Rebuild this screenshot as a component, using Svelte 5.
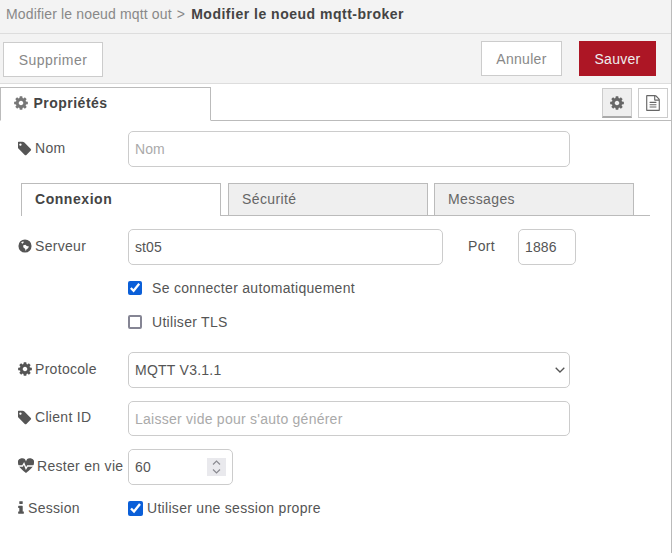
<script>
  const cog = "M1024 896q0-106-75-181t-181-75-181 75-75 181 75 181 181 75 181-75 75-181zm512-109v222q0 12-8 23t-20 13l-185 28q-19 54-39 91 35 50 107 138 10 12 10 25t-9 23q-27 37-99 108t-94 71q-12 0-26-9l-138-108q-44 23-91 38-16 136-29 186-7 28-36 28h-222q-14 0-24.5-8.5t-11.5-21.5l-28-184q-49-16-90-37l-141 107q-10 9-25 9-14 0-25-11-126-114-165-168-7-10-7-23 0-12 8-23 15-21 51-66.5t54-70.5q-27-50-41-99l-183-27q-13-2-21-12.5t-8-23.5v-222q0-12 8-23t19-13l186-28q14-46 39-92-40-57-107-138-10-12-10-24 0-10 9-23 26-36 98.5-107.5t94.5-71.5q13 0 26 10l138 107q44-23 91-38 16-136 29-186 7-28 36-28h222q14 0 24.5 8.5t11.5 21.5l28 184q49 16 90 37l142-107q9-9 24-9 13 0 25 10 129 119 165 170 7 8 7 22 0 12-8 23-15 21-51 66.5t-54 70.5q26 50 41 98l183 28q13 2 21 12.5t8 23.5z";
  const tag = "M384 512q0-53-37.5-90.5t-90.5-37.5-90.5 37.5-37.5 90.5 37.5 90.5 90.5 37.5 90.5-37.5 37.5-90.5zm1067 576q0 53-37 90l-491 492q-39 37-91 37-53 0-90-37l-715-716q-38-37-64.5-101t-26.5-117v-416q0-52 38-90t90-38h416q53 0 117 26.5t102 64.5l715 714q37 39 37 91z";
  const info = "M640 1344v128q0 26-19 45t-45 19h-512q-26 0-45-19t-19-45v-128q0-26 19-45t45-19h64v-384h-64q-26 0-45-19t-19-45v-128q0-26 19-45t45-19h384q26 0 45 19t19 45v576h64q26 0 45 19t19 45zm-128-1152v192q0 26-19 45t-45 19h-256q-26 0-45-19t-19-45v-192q0-26 19-45t45-19h256q26 0 45 19t19 45z";
  const file = "M1468 380q28 28 48 76t20 88v1152q0 40-28 68t-68 28h-1344q-40 0-68-28t-28-68v-1600q0-40 28-68t68-28h896q40 0 88 20t76 48zm-444-244v376h376q-10-29-22-41l-313-313q-12-12-41-22zm384 1528v-1024h-416q-40 0-68-28t-28-68v-416h-768v1536h1280zm-1024-864q0-14 9-23t23-9h704q14 0 23 9t9 23v64q0 14-9 23t-23 9h-704q-14 0-23-9t-9-23v-64zm736 224q14 0 23 9t9 23v64q0 14-9 23t-23 9h-704q-14 0-23-9t-9-23v-64q0-14 9-23t23-9h704zm0 256q14 0 23 9t9 23v64q0 14-9 23t-23 9h-704q-14 0-23-9t-9-23v-64q0-14 9-23t23-9h704z";
</script>

<div class="tray">
  <div class="title">
    <span class="crumb">Modifier le noeud mqtt out</span>
    <span class="sep">&gt;</span>
    <b>Modifier le noeud mqtt-broker</b>
  </div>

  <div class="toolbar">
    <button class="btn del">Supprimer</button>
    <div class="actions">
      <button class="btn cancel">Annuler</button>
      <button class="btn save">Sauver</button>
    </div>
  </div>

  <div class="tabs">
    <div class="tab">
      <svg class="ico" viewBox="0 0 1536 1792"><path d={cog} /></svg>
      Propriétés
    </div>
    <div class="tab-btns">
      <button class="icon-btn on" aria-label="Propriétés">
        <svg viewBox="0 0 1536 1792"><path d={cog} /></svg>
      </button>
      <button class="icon-btn" aria-label="Description">
        <svg viewBox="0 0 1536 1792"><path d={file} /></svg>
      </button>
    </div>
  </div>

  <form class="body">
    <div class="row low">
      <label for="nom"><svg class="ico" viewBox="0 0 1536 1792"><path d={tag} /></svg>Nom</label>
      <input id="nom" class="wide" placeholder="Nom" />
    </div>

    <div class="subtabs">
      <div class="sub active">Connexion</div>
      <div class="sub">Sécurité</div>
      <div class="sub">Messages</div>
    </div>

    <div class="row low">
      <label for="srv">
        <svg class="ico" viewBox="0 0 16 16">
          <path fill-rule="evenodd" d="M8 .5a7.500 7.500 0 1 1 0 15 7.500 7.500 0 0 1 0-15zM3.500 4l2.500-1.500.5 1.500-1.500 1.500zM6 7l2.500-.5 1.500 1.500 2.500.5-1 2-2 1.500-.5 2-1-3-2-1.500z" />
        </svg>Serveur
      </label>
      <input id="srv" class="host" value="st05" />
      <label class="port-label" for="port">Port</label>
      <input id="port" class="port" value="1886" />
    </div>

    <div class="check first">
      <input type="checkbox" id="auto" checked />
      <label for="auto">Se connecter automatiquement</label>
    </div>
    <div class="check second">
      <input type="checkbox" id="tls" />
      <label for="tls">Utiliser TLS</label>
    </div>

    <div class="row proto low">
      <label for="proto"><svg class="ico" viewBox="0 0 1536 1792"><path d={cog} /></svg>Protocole</label>
      <select id="proto" class="wide"><option>MQTT V3.1.1</option></select>
    </div>

    <div class="row client">
      <label for="cid"><svg class="ico" viewBox="0 0 1536 1792"><path d={tag} /></svg>Client ID</label>
      <input id="cid" class="wide short" placeholder="Laisser vide pour s'auto générer" />
    </div>

    <div class="row keep">
      <label for="ka">
        <svg class="ico heart" viewBox="0 0 16 14">
          <path d="M8 14C5 11.500 0 8 0 4a4 4 0 0 1 8-1.500A4 4 0 0 1 16 4c0 4-5 7.500-8 10z" />
          <path d="M0 7h4.500l1.500-2.500 2 5 1.500-2.500H16" fill="none" stroke="#fff" stroke-width="1.300" />
        </svg>Rester en vie
      </label>
      <div class="number">
        <input id="ka" value="60" />
        <span class="spin">
          <svg viewBox="0 0 9 16"><path d="M1 5.500l3.500-3.500 3.500 3.500M1 10.500l3.500 3.500 3.500-3.500" /></svg>
        </span>
      </div>
    </div>

    <div class="row session">
      <label for="clean"><svg class="ico info" viewBox="0 0 640 1792"><path d={info} /></svg>Session</label>
      <input type="checkbox" id="clean" checked />
      <label class="clean-label" for="clean">Utiliser une session propre</label>
    </div>
  </form>
</div>

<style>
  :global(body) {
    background: #fff;
  }

  .tray {
    box-sizing: border-box;
    width: 672px;
    height: 553px;
    border-right: 1px solid #bbb;
    font-family: "Liberation Sans", Arial, sans-serif;
    font-size: 14px;
    letter-spacing: 0.3px;
    color: #555;
    background: #fff;
  }

  .title {
    box-sizing: border-box;
    height: 34px;
    padding: 6px 6px 0;
    background: #f3f3f3;
    border-bottom: 1px solid #ddd;
    color: #888;
    line-height: 16px;
    letter-spacing: 0.15px;
  }

  .title b {
    color: #444;
    letter-spacing: 0.5px;
  }

  .sep {
    margin: 0 2px 0 1px;
  }

  .toolbar {
    box-sizing: border-box;
    height: 50px;
    display: flex;
    justify-content: space-between;
    padding: 7px 15px 0 3px;
    background: #f3f3f3;
    border-bottom: 1px solid #ddd;
  }

  .actions {
    display: flex;
    gap: 17px;
  }

  .btn {
    box-sizing: border-box;
    height: 35px;
    background: #fff;
    border: 1px solid #ccc;
    color: #888;
    font: inherit;
    letter-spacing: 0.3px;
    padding: 0;
  }

  .del {
    width: 100px;
    margin-top: 1px;
    letter-spacing: 0.45px;
  }

  .cancel {
    width: 81px;
  }

  .save {
    width: 77px;
    background: #ad1625;
    border-color: #ad1625;
    color: #eee;
  }

  .tabs {
    box-sizing: border-box;
    height: 37px;
    padding-top: 3px;
    display: flex;
    justify-content: space-between;
    border-bottom: 1px solid #bbb;
  }

  .tab {
    box-sizing: border-box;
    width: 211px;
    height: 34px;
    padding: 7px 0 0 13px;
    border: 1px solid #bbb;
    border-bottom: 1px solid #fff;
    font-weight: bold;
    letter-spacing: 0.5px;
    color: #444;
    line-height: 16px;
    background: #fff;
  }

  .tab .ico {
    margin-right: 1px;
    color: #777;
  }

  .ico {
    width: 14px;
    height: 16px;
    fill: currentColor;
    vertical-align: -3px;
    margin-right: 3px;
  }

  .tab-btns {
    display: flex;
    gap: 6px;
    padding: 1px 3px 0 0;
  }

  .icon-btn {
    box-sizing: border-box;
    width: 30px;
    height: 30px;
    padding: 0;
    background: #fff;
    border: 1px solid #ccc;
    display: flex;
    align-items: center;
    justify-content: center;
  }

  .icon-btn svg {
    width: 14px;
    height: 16px;
    fill: #666;
  }

  .icon-btn.on {
    background: #efefef;
    border-bottom: 2px solid #aaa;
  }

  .body {
    padding: 10px 0 0 18px;
  }

  .row {
    display: flex;
    align-items: flex-start;
  }

  .row > label:first-child {
    width: 110px;
    flex: none;
    padding-top: 8px;
    line-height: 16px;
    white-space: nowrap;
  }

  .row.low > label:first-child {
    padding-top: 9px;
  }

  input:not([type="checkbox"]),
  select {
    box-sizing: border-box;
    height: 36px;
    padding: 0 6px;
    border: 1px solid #ccc;
    border-radius: 5px;
    background: #fff;
    color: #555;
    font: inherit;
    letter-spacing: 0.1px;
    outline: none;
  }

  select {
    appearance: none;
    letter-spacing: 0.25px;
    background-image: url("data:image/svg+xml,%3Csvg xmlns='http://www.w3.org/2000/svg' width='10' height='6'%3E%3Cpath d='M.7.7 5 5l4.300-4.300' fill='none' stroke='%23555' stroke-width='1.300'/%3E%3C/svg%3E");
    background-repeat: no-repeat;
    background-position: right 4px center;
  }

  input::placeholder {
    color: #aaa;
    opacity: 1;
  }

  #cid {
    letter-spacing: 0.25px;
  }

  .wide {
    width: 442px;
  }

  .short {
    height: 35px !important;
  }

  .subtabs {
    display: flex;
    width: 629px;
    height: 33px;
    margin: 16px 0 13px 3px;
    box-sizing: border-box;
    border-bottom: 1px solid #bbb;
    gap: 7px;
  }

  .sub {
    box-sizing: border-box;
    width: 200px;
    height: 32px;
    padding: 7px 0 0 13px;
    border: 1px solid #bbb;
    border-bottom: none;
    background: #efefef;
    color: #666;
    line-height: 16px;
    letter-spacing: 0.4px;
  }

  .sub + .sub + .sub {
    margin-left: -1px;
  }

  .sub.active {
    height: 33px;
    background: #fff;
    color: #444;
    font-weight: bold;
    letter-spacing: 0.55px;
  }

  .host {
    width: 315px;
  }

  .port-label {
    margin-left: 25px;
    width: 50px;
    padding-top: 9px;
    line-height: 16px;
  }

  .port {
    width: 58px;
  }

  .check {
    display: flex;
    align-items: center;
    margin-left: 110px;
    height: 16px;
  }

  .check input,
  .session input {
    width: 14px;
    height: 14px;
    margin: 0;
    accent-color: #0b5fd8;
    flex: none;
  }

  #tls {
    appearance: none;
    box-sizing: border-box;
    border: 2px solid #858594;
    border-radius: 2px;
    background: #fff;
  }

  .session input {
    width: 15px;
    height: 15px;
  }

  .check label {
    margin-left: 10px;
  }

  .first {
    margin-top: 15px;
  }

  .second {
    margin-top: 18px;
  }

  .proto {
    margin-top: 22px;
  }

  .client {
    margin-top: 13px;
  }

  .keep {
    margin-top: 13px;
  }

  .number {
    box-sizing: border-box;
    width: 105px;
    height: 36px;
    display: flex;
    align-items: center;
    border: 1px solid #ccc;
    border-radius: 5px;
  }

  .number input {
    width: 76px;
    height: 34px;
    border: none;
  }

  .spin {
    width: 19px;
    height: 18px;
    margin-left: 2px;
    background: #e9e9ed;
    display: flex;
    align-items: center;
    justify-content: center;
  }

  .spin svg {
    width: 9px;
    height: 16px;
    fill: none;
    stroke: #8a8a90;
    stroke-width: 1.200;
  }

  .heart {
    width: 16px;
    margin-right: 3px;
  }

  .keep label {
    padding-top: 9px !important;
  }

  .info {
    width: 6px;
    margin-right: 4px;
  }

  .session {
    margin-top: 14px;
    align-items: center;
    height: 18px;
  }

  .session > label:first-child {
    padding-top: 0;
  }

  .clean-label {
    margin-left: 4px;
  }
</style>
